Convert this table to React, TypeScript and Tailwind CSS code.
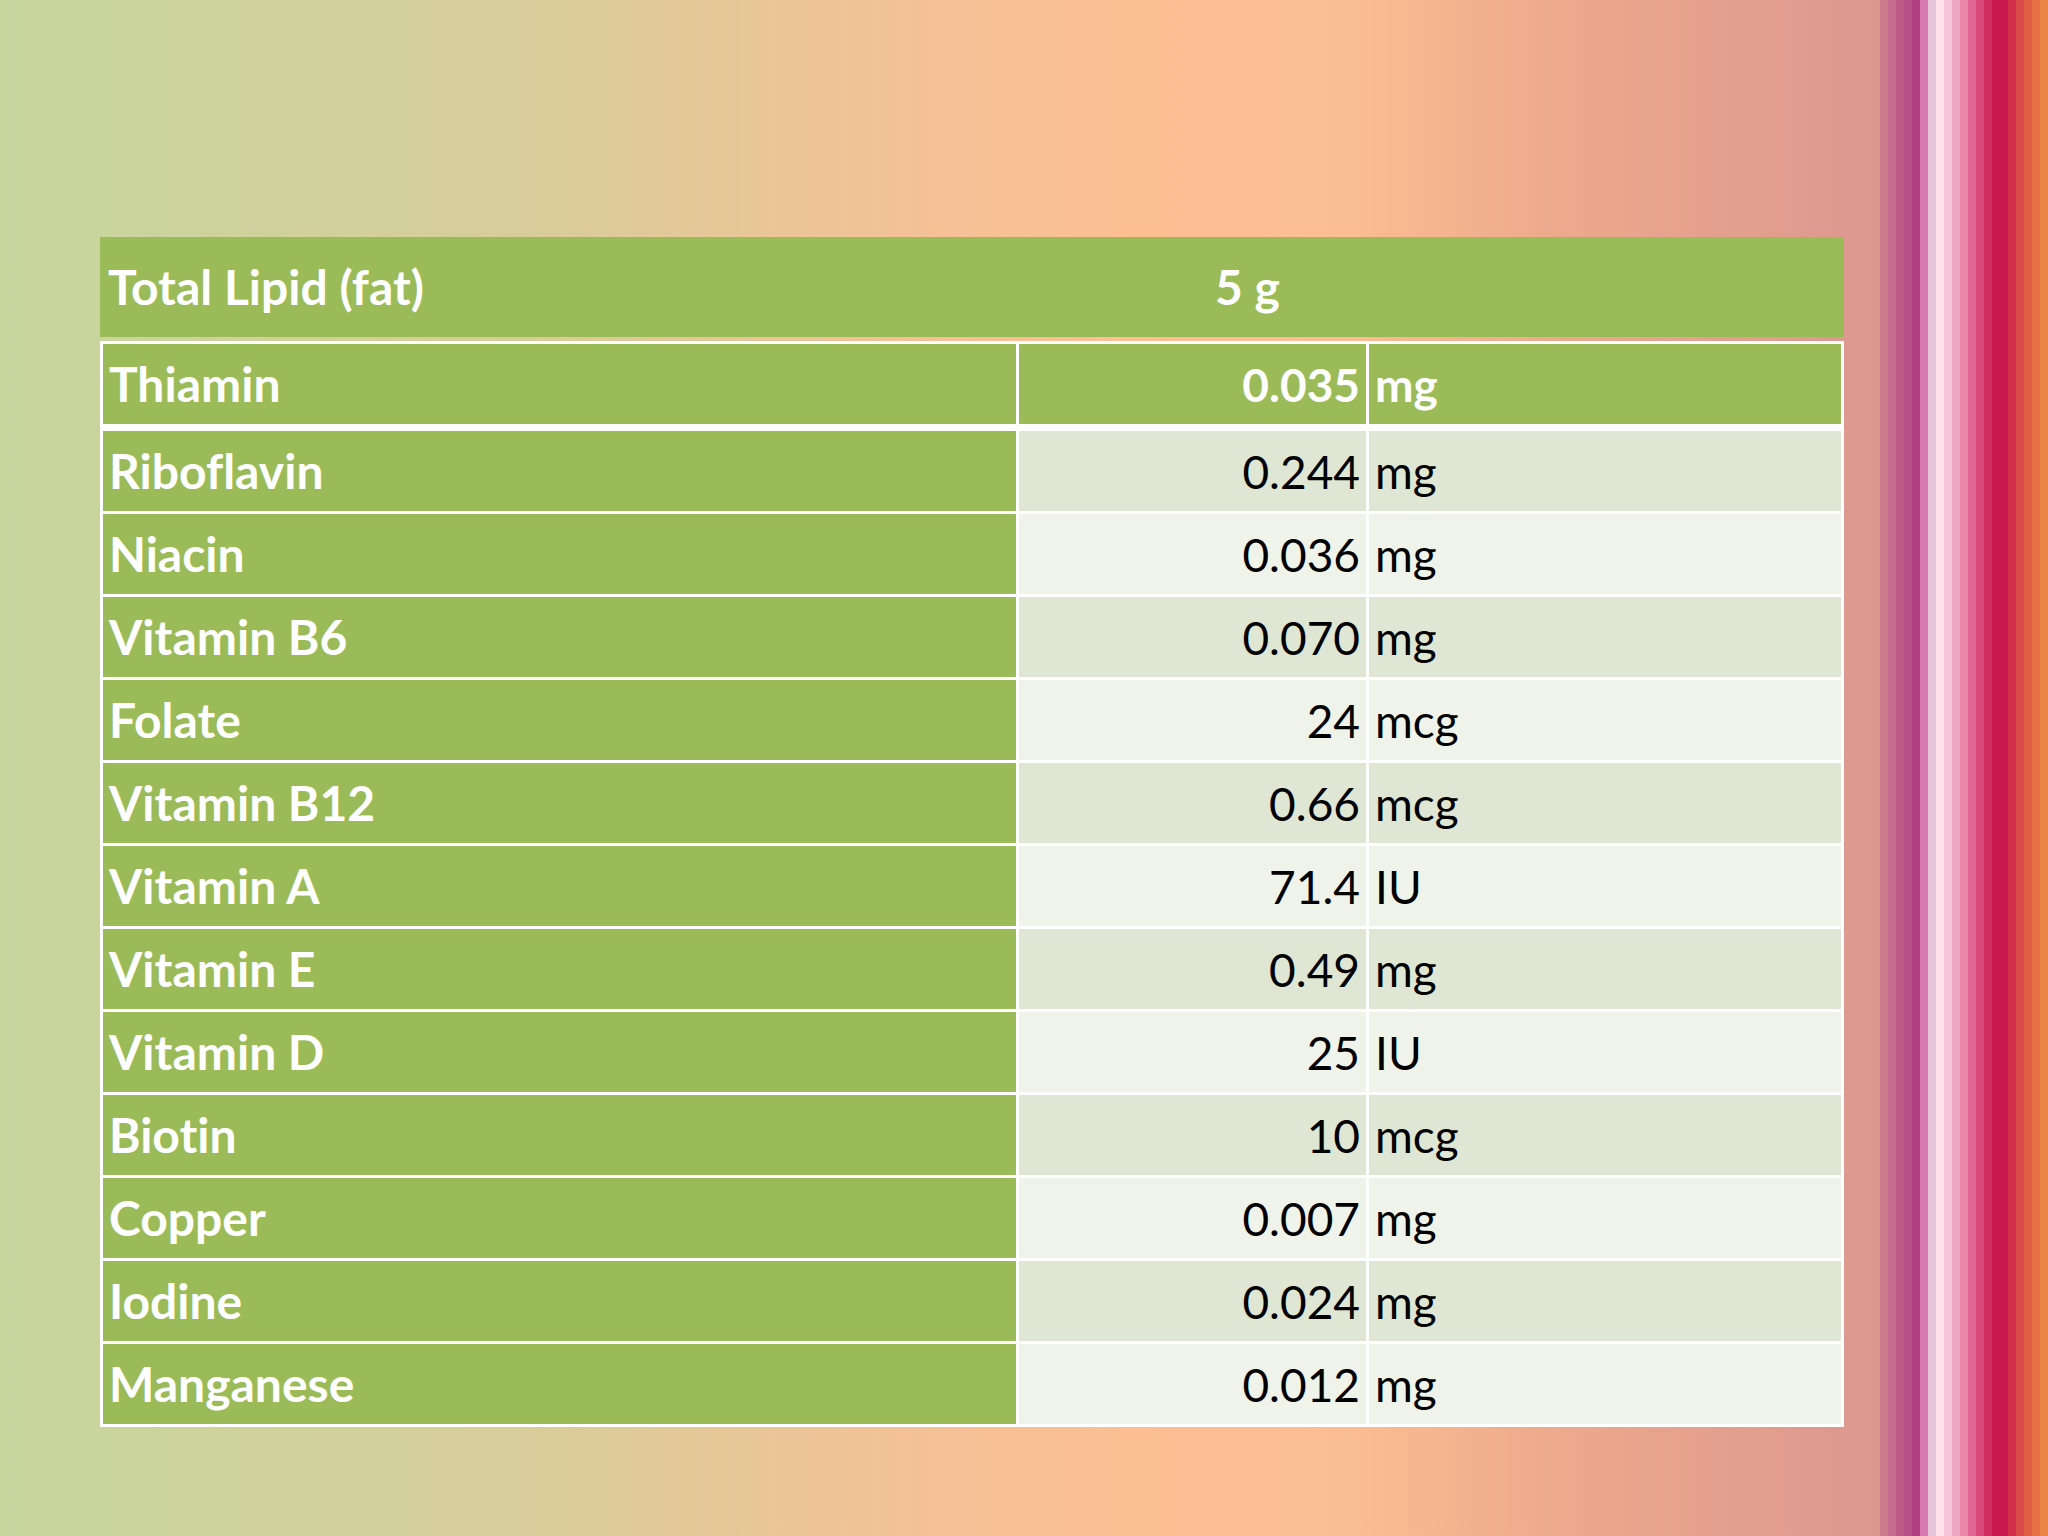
import React from 'react';

const ROWS = [
    { name: "Riboflavin", value: "0.244", unit: "mg" },
    { name: "Niacin", value: "0.036", unit: "mg" },
    { name: "Vitamin B6", value: "0.070", unit: "mg" },
    { name: "Folate", value: "24", unit: "mcg" },
    { name: "Vitamin B12", value: "0.66", unit: "mcg" },
    { name: "Vitamin A", value: "71.4", unit: "IU" },
    { name: "Vitamin E", value: "0.49", unit: "mg" },
    { name: "Vitamin D", value: "25", unit: "IU" },
    { name: "Biotin", value: "10", unit: "mcg" },
    { name: "Copper", value: "0.007", unit: "mg" },
    { name: "Iodine", value: "0.024", unit: "mg" },
    { name: "Manganese", value: "0.012", unit: "mg" },
];

const STRIPES = [
    "bg-[#cc7a8e]", "bg-[#c66c8c]", "bg-[#bc5a88]", "bg-[#b84e86]", "bg-[#b03e80]",
    "bg-[#d878b0]", "bg-[#e8c4d8]", "bg-[#fde2ec]", "bg-[#f6c6d8]", "bg-[#eea7c0]",
    "bg-[#ea86a8]", "bg-[#e06892]", "bg-[#d84a7a]", "bg-[#d02e62]", "bg-[#c8184c]",
    "bg-[#c8184c]", "bg-[#d0304a]", "bg-[#d84a48]", "bg-[#de5e44]", "bg-[#e47044]",
    "bg-[#e88444]",
];

export default function App() {
    return (
        <div className="flex w-[2048px] h-[1536px] overflow-hidden font-['Lato',sans-serif] [font-variant-ligatures:none]">
            <main className="flex-1 bg-[linear-gradient(to_right,#c6d69d_0%,#d8cd9a_28%,#f4c196_49%,#fdbf92_62%,#fbbd92_72%,#eca98c_83%,#dc9790_100%)]">
                {/* header strip */}
                <div className="ml-[100px] mt-[237px] w-[1744px] h-[100px] bg-[#9bbb59] flex items-center text-white font-bold text-[48px]">
                    <span className="pl-[8px] w-[1115px]">Total Lipid (fat)</span>
                    <span>5 g</span>
                </div>

                {/* nutrient table */}
                <div className="ml-[100px] mt-[4px] w-[1744px] border-[3px] border-white bg-white flex flex-col text-[46px]">
                    <div className="grid grid-cols-[913px_347px_1fr] gap-x-[3px] h-[80px] mb-[7px] text-white font-bold">
                        <div className="bg-[#9bbb59] flex items-center pl-[6px] text-[48px]">Thiamin</div>
                        <div className="bg-[#9bbb59] flex items-center justify-end pr-[6px]">0.035</div>
                        <div className="bg-[#9bbb59] flex items-center pl-[6px]">mg</div>
                    </div>
                    <div className="flex flex-col gap-y-[3px]">
                        {ROWS.map((row, i) => (
                            <div key={row.name} className="grid grid-cols-[913px_347px_1fr] gap-x-[3px] h-[80px]">
                                <div className="bg-[#9bbb59] flex items-center pl-[6px] text-white font-bold text-[48px]">{row.name}</div>
                                <div className={`${i % 2 === 0 ? 'bg-[#dfe6d3]' : 'bg-[#eff3ea]'} flex items-center justify-end pr-[6px] text-black`}>{row.value}</div>
                                <div className={`${i % 2 === 0 ? 'bg-[#dfe6d3]' : 'bg-[#eff3ea]'} flex items-center pl-[6px] text-black`}>{row.unit}</div>
                            </div>
                        ))}
                    </div>
                </div>
            </main>

            {/* decorative stripes */}
            <div className="w-[168px] flex">
                {STRIPES.map((c, i) => (
                    <div key={i} className={`flex-1 ${c}`}></div>
                ))}
            </div>
        </div>
    );
}
